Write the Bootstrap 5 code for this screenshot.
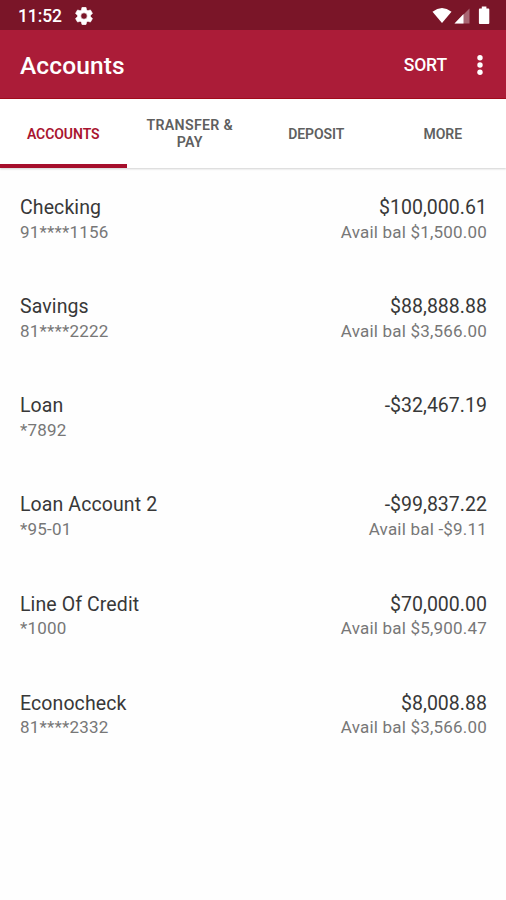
<!DOCTYPE html>
<html lang="en">
<head>
<meta charset="utf-8">
<meta name="viewport" content="width=device-width, initial-scale=1">
<title>Accounts</title>
<link href="https://cdn.jsdelivr.net/npm/bootstrap@5.3.0/dist/css/bootstrap.min.css" rel="stylesheet">
<style>
body { font-family: Roboto, "Liberation Sans", sans-serif; background: #fefefe; min-height: 900px; }
.status-bar { height: 30px; background: #7a1528; padding: 2px 15px 0 18px; }
.clock { font-size: 17.5px; font-weight: 500; line-height: 28px; letter-spacing: -.1px; width: 57px; }
.app-bar { height: 69px; background: #ab1c38; border-bottom: 1px solid #a30c1c; padding: 4px 23px 0 20px; }
.app-title { font-size: 24.5px; font-weight: 500; line-height: 32px; letter-spacing: .12px; }
.sort-btn { font-size: 17.5px; font-weight: 500; line-height: 30px; letter-spacing: -.1px; margin: -2px 30px 0 0; }
.tabs { height: 69px; background: #fff; box-shadow: 0 1px 2px rgba(0,0,0,.18); }
.tabs .nav-link { height: 69px; padding: 5px 12px 0; font-size: 14px; line-height: 17px; font-weight: 600; letter-spacing: -.06px; color: #5f5f5f; border-bottom: 4px solid transparent; }
.tabs .nav-link.active { color: #a91530; border-bottom-color: #a60f2c; }
.tabs .nav-link.wide-label { font-size: 14.2px; letter-spacing: .3px; }
.accounts { padding: 27px 19px 0 20px; }
.account { height: 99.15px; }
.acct-main { font-size: 19.5px; line-height: 25px; color: #383838; letter-spacing: .1px; }
.acct-amount { letter-spacing: .03px; }
.acct-sub { font-size: 17px; line-height: 24px; margin-top: -.4px; color: #777; letter-spacing: .2px; }
</style>
</head>
<body>
<div class="status-bar d-flex align-items-center justify-content-between text-white">
  <div class="d-flex align-items-center">
    <span class="clock">11:52</span>
    <svg width="18" height="18" viewBox="2 2 20 20" fill="#fff" stroke="#fff" stroke-width=".7" aria-hidden="true"><path d="M19.14 12.94c.04-.3.06-.61.06-.94s-.02-.64-.07-.94l2.03-1.58a.49.49 0 0 0 .12-.61l-1.92-3.32a.49.49 0 0 0-.59-.22l-2.39.96a7 7 0 0 0-1.62-.94l-.36-2.54A.48.48 0 0 0 13.92 2.4h-3.84a.48.48 0 0 0-.48.41l-.36 2.54c-.59.24-1.13.57-1.62.94l-2.39-.96a.49.49 0 0 0-.59.22L2.74 8.87a.48.48 0 0 0 .12.61l2.03 1.58c-.05.3-.09.63-.09.94s.02.64.07.94l-2.03 1.58a.49.49 0 0 0-.12.61l1.92 3.32c.12.22.37.29.59.22l2.39-.96c.5.38 1.03.7 1.62.94l.36 2.54c.05.24.24.41.48.41h3.84c.24 0 .44-.17.47-.41l.36-2.54a7 7 0 0 0 1.62-.94l2.39.96c.22.08.47 0 .59-.22l1.92-3.32a.48.48 0 0 0-.12-.61zM12 15.6a3.6 3.6 0 1 1 0-7.2 3.6 3.6 0 0 1 0 7.2z"/></svg>
  </div>
  <svg width="60" height="20" viewBox="0 0 60 20" fill="#fff" aria-hidden="true">
    <path d="M1.500 5.700Q11 -1.700 20.500 5.700L11 17z"/>
    <path d="M38.500 2.500V17.500H23.500z" opacity=".35"/>
    <path d="M32.500 8V17.500H23.500z"/>
    <path d="M48.800 2.500h2V.5h4.600v2h2q.9 0 .9.900V17q0 .9-.9.900h-8.600q-.9 0-.9-.900V3.400q0-.9.900-.900z"/>
  </svg>
</div>
<header class="app-bar d-flex align-items-center text-white">
  <h1 class="app-title mb-0 me-auto">Accounts</h1>
  <span class="sort-btn" role="button">SORT</span>
  <svg width="6" height="22" viewBox="0 0 6 22" fill="#fff" aria-label="More options"><circle cx="3" cy="2.700" r="2.700"/><circle cx="3" cy="10" r="2.700"/><circle cx="3" cy="17.300" r="2.700"/></svg>
</header>
<nav class="tabs nav nav-fill row g-0">
  <a class="col-3 nav-link active d-flex align-items-center justify-content-center" href="#">ACCOUNTS</a>
  <a class="col-3 nav-link wide-label d-flex align-items-center justify-content-center" href="#">TRANSFER &amp; PAY</a>
  <a class="col-3 nav-link d-flex align-items-center justify-content-center" href="#">DEPOSIT</a>
  <a class="col-3 nav-link d-flex align-items-center justify-content-center" href="#">MORE</a>
</nav>
<main class="accounts">
  <div class="account d-flex justify-content-between">
    <div><div class="acct-main">Checking</div><div class="acct-sub">91****1156</div></div>
    <div class="text-end"><div class="acct-main acct-amount">$100,000.61</div><div class="acct-sub">Avail bal $1,500.00</div></div>
  </div>
  <div class="account d-flex justify-content-between">
    <div><div class="acct-main">Savings</div><div class="acct-sub">81****2222</div></div>
    <div class="text-end"><div class="acct-main acct-amount">$88,888.88</div><div class="acct-sub">Avail bal $3,566.00</div></div>
  </div>
  <div class="account d-flex justify-content-between">
    <div><div class="acct-main">Loan</div><div class="acct-sub">*7892</div></div>
    <div class="text-end"><div class="acct-main acct-amount">-$32,467.19</div></div>
  </div>
  <div class="account d-flex justify-content-between">
    <div><div class="acct-main">Loan Account 2</div><div class="acct-sub">*95-01</div></div>
    <div class="text-end"><div class="acct-main acct-amount">-$99,837.22</div><div class="acct-sub">Avail bal -$9.11</div></div>
  </div>
  <div class="account d-flex justify-content-between">
    <div><div class="acct-main">Line Of Credit</div><div class="acct-sub">*1000</div></div>
    <div class="text-end"><div class="acct-main acct-amount">$70,000.00</div><div class="acct-sub">Avail bal $5,900.47</div></div>
  </div>
  <div class="account d-flex justify-content-between">
    <div><div class="acct-main">Econocheck</div><div class="acct-sub">81****2332</div></div>
    <div class="text-end"><div class="acct-main acct-amount">$8,008.88</div><div class="acct-sub">Avail bal $3,566.00</div></div>
  </div>
</main>
<script src="https://cdn.jsdelivr.net/npm/bootstrap@5.3.0/dist/js/bootstrap.bundle.min.js"></script>
</body>
</html>
